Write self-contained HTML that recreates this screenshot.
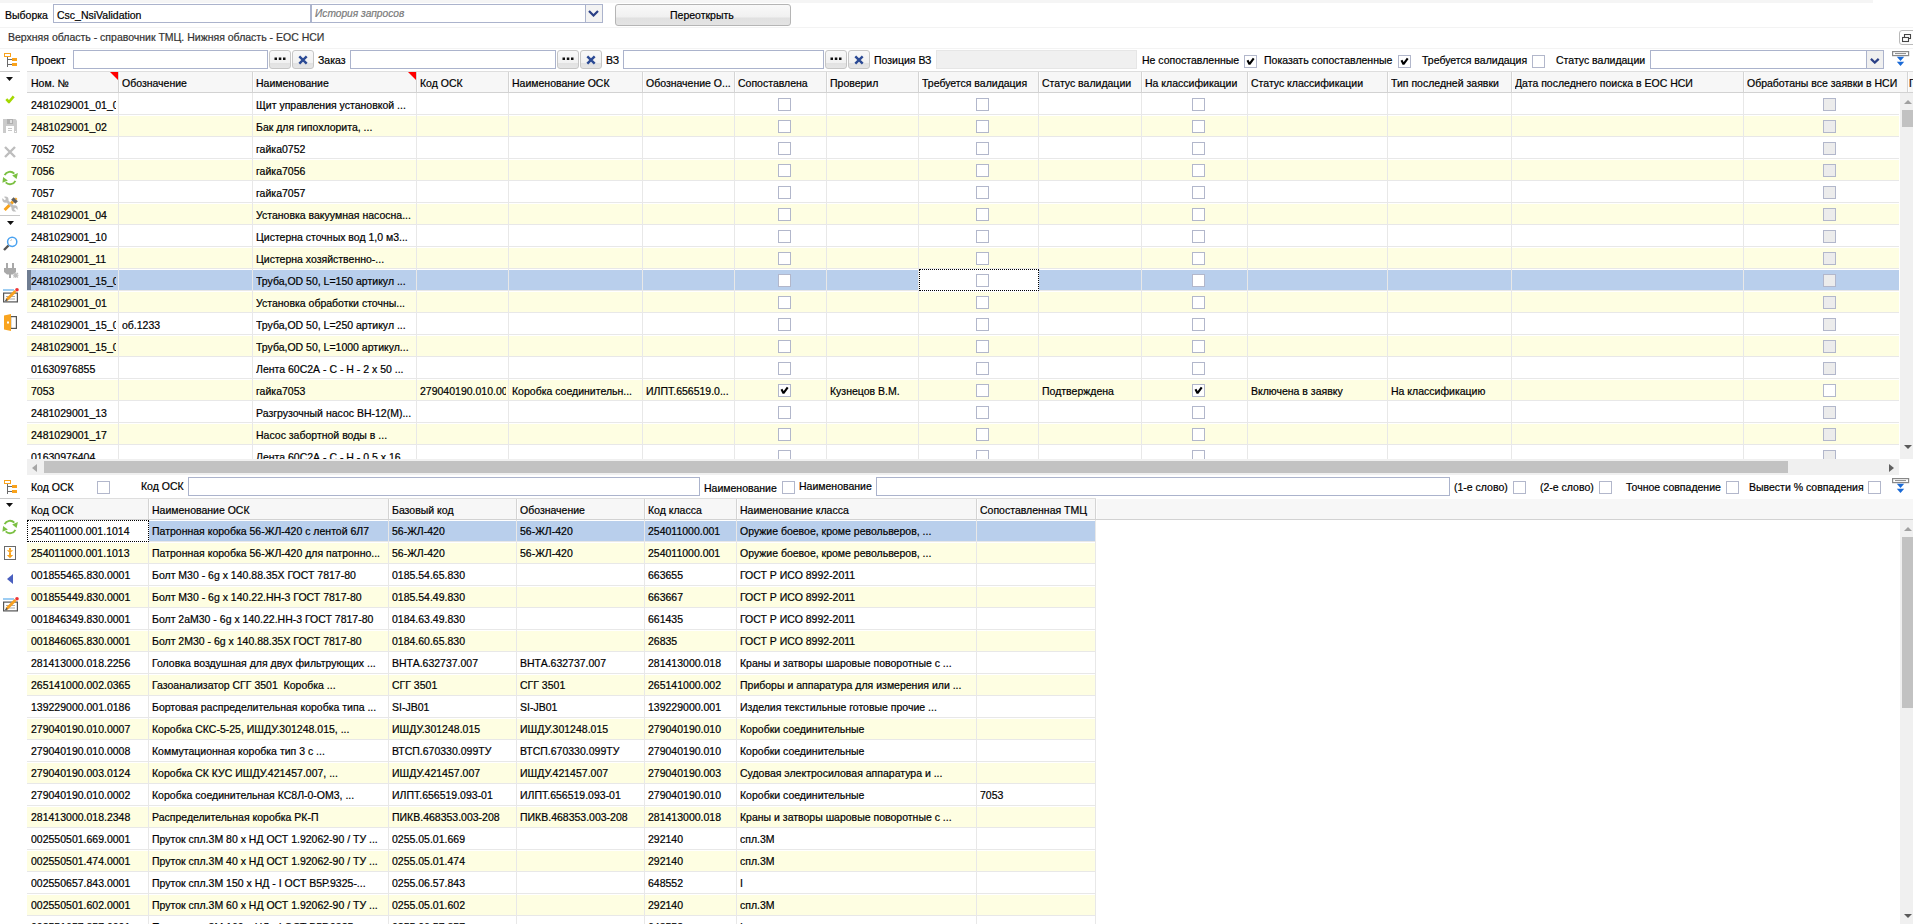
<!DOCTYPE html><html><head><meta charset="utf-8"><style>
html,body{margin:0;padding:0}
body{-webkit-text-stroke-width:0.2px;width:1913px;height:924px;overflow:hidden;position:relative;background:#fff;font-family:"Liberation Sans",sans-serif;font-size:10.5px;color:#000}
.t,.r,.cb,.btn,.hd,.ic{position:absolute}
.t{white-space:nowrap;line-height:12px;height:12px}
.cb{width:11px;height:11px;border:1px solid #b2b7cb}
.btn{border:1px solid #c6c6c6;border-radius:3px;background:linear-gradient(#f8f8f8 0,#f1f1f1 72%,#e2e2e2 73%,#e6e6e6 100%)}
.clip{position:absolute;overflow:hidden;white-space:pre;line-height:12px;height:12px}
</style></head><body>
<div class="r" style="left:0px;top:0px;width:1873px;height:3px;background:#f5f5f5"></div>
<div class="t" style="left:5px;top:9px;">Выборка</div>
<div class="r" style="left:53px;top:4px;width:256px;height:17px;border:1px solid #abb3cc;background:#fff"></div>
<div class="t" style="left:57px;top:9px;">Csc_NsiValidation</div>
<div class="r" style="left:311px;top:4px;width:290px;height:17px;border:1px solid #abb3cc;background:#fff"></div>
<div class="t" style="left:315px;top:8px;font-style:italic;color:#7a7a7a;font-size:10.2px">История запросов</div>
<div class="r" style="left:585px;top:5px;width:16px;height:17px;background:#f3f3f3;border-left:1px solid #abb3cc"></div>
<svg class="ic" style="left:588px;top:10px" width="11" height="7"><path d="M1 1 L5.5 5.5 L10 1" stroke="#2a3f86" stroke-width="2.2" fill="none"/></svg>
<div class="btn" style="left:615px;top:4px;width:174px;height:20px;border-color:#b5b5b5;background:linear-gradient(#f9f9f9 0,#f0f0f0 62%,#e0e0e0 63%,#e4e4e4 100%)"></div>
<div class="t" style="left:670px;top:9px;">Переоткрыть</div>
<div class="r" style="left:0px;top:27px;width:1913px;height:1px;background:#f3f3f3"></div>
<div class="t" style="left:8px;top:31px;color:#333">Верхняя область - справочник ТМЦ. Нижняя область - ЕОС НСИ</div>
<div class="r" style="left:1899px;top:30px;width:16px;height:13px;border:1px solid #b9b9b9;border-radius:3px;background:#fdfdfd"></div>
<svg class="ic" style="left:1902px;top:34px" width="10" height="9"><rect x="2.5" y="0.5" width="6" height="4" fill="#fdfdfd" stroke="#444" stroke-width="1.1"/><rect x="0.5" y="3.5" width="6" height="4" fill="#fdfdfd" stroke="#444" stroke-width="1.1"/></svg>
<div class="r" style="left:0px;top:48px;width:1913px;height:1px;background:#f3f3f3"></div>
<svg class="ic" style="left:4px;top:53px" width="14" height="15" viewBox="0 0 14 15"><rect x="0.5" y="0.5" width="6" height="3" fill="#fff" stroke="#f9a21b" stroke-width="1"/><path d="M3.5 4 V14 M3.5 6.5 H8 M3.5 11.5 H8" stroke="#6a6a6a" stroke-width="1" fill="none"/><rect x="8" y="5" width="5" height="3" fill="#f9a21b"/><rect x="8" y="10" width="5" height="3" fill="#f9a21b"/></svg>
<div class="t" style="left:31px;top:54px;">Проект</div>
<div class="r" style="left:73px;top:50px;width:193px;height:17px;border:1px solid #abb3cc;background:#fff"></div>
<div class="btn" style="left:269px;top:50px;width:20px;height:17px"><svg width="20" height="17" style="position:absolute;left:0;top:0"><rect x="4.5" y="6.5" width="2.5" height="2.5" fill="#111"/><rect x="8.8" y="6.5" width="2.5" height="2.5" fill="#111"/><rect x="13" y="6.5" width="2.5" height="2.5" fill="#111"/></svg></div>
<div class="btn" style="left:292px;top:50px;width:20px;height:17px"><svg width="20" height="17" style="position:absolute;left:0;top:0"><path d="M6.3 5.3 L13.7 12.7 M13.7 5.3 L6.3 12.7" stroke="#2b4a94" stroke-width="2.4"/></svg></div>
<div class="t" style="left:318px;top:54px;">Заказ</div>
<div class="r" style="left:350px;top:50px;width:204px;height:17px;border:1px solid #abb3cc;background:#fff"></div>
<div class="btn" style="left:557px;top:50px;width:20px;height:17px"><svg width="20" height="17" style="position:absolute;left:0;top:0"><rect x="4.5" y="6.5" width="2.5" height="2.5" fill="#111"/><rect x="8.8" y="6.5" width="2.5" height="2.5" fill="#111"/><rect x="13" y="6.5" width="2.5" height="2.5" fill="#111"/></svg></div>
<div class="btn" style="left:580px;top:50px;width:20px;height:17px"><svg width="20" height="17" style="position:absolute;left:0;top:0"><path d="M6.3 5.3 L13.7 12.7 M13.7 5.3 L6.3 12.7" stroke="#2b4a94" stroke-width="2.4"/></svg></div>
<div class="t" style="left:606px;top:54px;">ВЗ</div>
<div class="r" style="left:623px;top:50px;width:199px;height:17px;border:1px solid #abb3cc;background:#fff"></div>
<div class="btn" style="left:825px;top:50px;width:20px;height:17px"><svg width="20" height="17" style="position:absolute;left:0;top:0"><rect x="4.5" y="6.5" width="2.5" height="2.5" fill="#111"/><rect x="8.8" y="6.5" width="2.5" height="2.5" fill="#111"/><rect x="13" y="6.5" width="2.5" height="2.5" fill="#111"/></svg></div>
<div class="btn" style="left:848px;top:50px;width:20px;height:17px"><svg width="20" height="17" style="position:absolute;left:0;top:0"><path d="M6.3 5.3 L13.7 12.7 M13.7 5.3 L6.3 12.7" stroke="#2b4a94" stroke-width="2.4"/></svg></div>
<div class="t" style="left:874px;top:54px;">Позиция ВЗ</div>
<div class="r" style="left:936px;top:50px;width:199px;height:17px;background:#f0f0f0;border:1px solid #e6e6e6"></div>
<div class="t" style="left:1142px;top:54px;">Не сопоставленные</div>
<div class="cb" style="left:1244px;top:55px;background:#fff"><svg width="11" height="11" viewBox="0 0 11 11" style="position:absolute;left:0;top:0"><path d="M2.5 4.3 L4.5 8.2 L8.7 2.3" stroke="#000" stroke-width="2.1" fill="none" stroke-linejoin="bevel"/></svg></div>
<div class="t" style="left:1264px;top:54px;">Показать сопоставленные</div>
<div class="cb" style="left:1398px;top:55px;background:#fff"><svg width="11" height="11" viewBox="0 0 11 11" style="position:absolute;left:0;top:0"><path d="M2.5 4.3 L4.5 8.2 L8.7 2.3" stroke="#000" stroke-width="2.1" fill="none" stroke-linejoin="bevel"/></svg></div>
<div class="t" style="left:1422px;top:54px;">Требуется валидация</div>
<div class="cb" style="left:1532px;top:55px;background:#fff"></div>
<div class="t" style="left:1556px;top:54px;">Статус валидации</div>
<div class="r" style="left:1650px;top:50px;width:232px;height:17px;border:1px solid #abb3cc;background:#fff"></div>
<div class="r" style="left:1866px;top:51px;width:16px;height:17px;background:#f0f0f0;border-left:1px solid #abb3cc"></div>
<svg class="ic" style="left:1870px;top:58px" width="10" height="6"><path d="M0.9 0.9 L4.8 4.6 L8.7 0.9" stroke="#2a3f86" stroke-width="2.2" fill="none"/></svg>
<svg class="ic" style="left:1892px;top:51px" width="18" height="16" viewBox="0 0 18 16"><rect x="0.6" y="0.6" width="16" height="4" fill="#fff" stroke="#888" stroke-width="1.2"/><path d="M3 2.6 H14" stroke="#888" stroke-width="1"/><path d="M4.8 5.8 L12.2 5.8 L8.5 9.9 Z M4.8 10.7 L12.2 10.7 L8.5 15 Z" fill="#1a6ad6"/></svg>
<div class="r" style="left:0px;top:71px;width:20px;height:1px;background:#c8c8c8"></div>
<svg class="ic" style="left:6px;top:77px" width="7" height="4"><path d="M0 0 H7 L3.5 4 Z" fill="#111"/></svg>
<div class="r" style="left:27px;top:71px;width:1886px;height:22px;overflow:hidden">
<div class="r" style="left:0;top:0;width:1886px;height:20px;background:#f7f7f7;border-top:1px solid #dedede;border-bottom:1px solid #d2d2d2"></div>
<div class="r" style="left:91px;top:1px;width:1px;height:20px;background:#d4d4d4"></div><div class="r" style="left:92px;top:1px;width:1px;height:20px;background:#fdfdfd"></div>
<div class="clip" style="left:4px;top:6px;width:85px">Ном. №</div>
<svg class="ic" style="left:83px;top:1px" width="8" height="8"><path d="M0 0 H8 V8 Z" fill="#f00"/></svg>
<div class="r" style="left:225px;top:1px;width:1px;height:20px;background:#d4d4d4"></div><div class="r" style="left:226px;top:1px;width:1px;height:20px;background:#fdfdfd"></div>
<div class="clip" style="left:95px;top:6px;width:128px">Обозначение</div>
<div class="r" style="left:389px;top:1px;width:1px;height:20px;background:#d4d4d4"></div><div class="r" style="left:390px;top:1px;width:1px;height:20px;background:#fdfdfd"></div>
<div class="clip" style="left:229px;top:6px;width:158px">Наименование</div>
<svg class="ic" style="left:381px;top:1px" width="8" height="8"><path d="M0 0 H8 V8 Z" fill="#f00"/></svg>
<div class="r" style="left:481px;top:1px;width:1px;height:20px;background:#d4d4d4"></div><div class="r" style="left:482px;top:1px;width:1px;height:20px;background:#fdfdfd"></div>
<div class="clip" style="left:393px;top:6px;width:86px">Код ОСК</div>
<div class="r" style="left:615px;top:1px;width:1px;height:20px;background:#d4d4d4"></div><div class="r" style="left:616px;top:1px;width:1px;height:20px;background:#fdfdfd"></div>
<div class="clip" style="left:485px;top:6px;width:128px">Наименование ОСК</div>
<div class="r" style="left:707px;top:1px;width:1px;height:20px;background:#d4d4d4"></div><div class="r" style="left:708px;top:1px;width:1px;height:20px;background:#fdfdfd"></div>
<div class="clip" style="left:619px;top:6px;width:86px">Обозначение О...</div>
<div class="r" style="left:799px;top:1px;width:1px;height:20px;background:#d4d4d4"></div><div class="r" style="left:800px;top:1px;width:1px;height:20px;background:#fdfdfd"></div>
<div class="clip" style="left:711px;top:6px;width:86px">Сопоставлена</div>
<div class="r" style="left:891px;top:1px;width:1px;height:20px;background:#d4d4d4"></div><div class="r" style="left:892px;top:1px;width:1px;height:20px;background:#fdfdfd"></div>
<div class="clip" style="left:803px;top:6px;width:86px">Проверил</div>
<div class="r" style="left:1011px;top:1px;width:1px;height:20px;background:#d4d4d4"></div><div class="r" style="left:1012px;top:1px;width:1px;height:20px;background:#fdfdfd"></div>
<div class="clip" style="left:895px;top:6px;width:114px">Требуется валидация</div>
<div class="r" style="left:1114px;top:1px;width:1px;height:20px;background:#d4d4d4"></div><div class="r" style="left:1115px;top:1px;width:1px;height:20px;background:#fdfdfd"></div>
<div class="clip" style="left:1015px;top:6px;width:97px">Статус валидации</div>
<div class="r" style="left:1220px;top:1px;width:1px;height:20px;background:#d4d4d4"></div><div class="r" style="left:1221px;top:1px;width:1px;height:20px;background:#fdfdfd"></div>
<div class="clip" style="left:1118px;top:6px;width:100px">На классификации</div>
<div class="r" style="left:1360px;top:1px;width:1px;height:20px;background:#d4d4d4"></div><div class="r" style="left:1361px;top:1px;width:1px;height:20px;background:#fdfdfd"></div>
<div class="clip" style="left:1224px;top:6px;width:134px">Статус классификации</div>
<div class="r" style="left:1484px;top:1px;width:1px;height:20px;background:#d4d4d4"></div><div class="r" style="left:1485px;top:1px;width:1px;height:20px;background:#fdfdfd"></div>
<div class="clip" style="left:1364px;top:6px;width:118px">Тип последней заявки</div>
<div class="r" style="left:1716px;top:1px;width:1px;height:20px;background:#d4d4d4"></div><div class="r" style="left:1717px;top:1px;width:1px;height:20px;background:#fdfdfd"></div>
<div class="clip" style="left:1488px;top:6px;width:226px">Дата последнего поиска в ЕОС НСИ</div>
<div class="r" style="left:1880px;top:1px;width:1px;height:20px;background:#d4d4d4"></div><div class="r" style="left:1881px;top:1px;width:1px;height:20px;background:#fdfdfd"></div>
<div class="clip" style="left:1720px;top:6px;width:158px">Обработаны все заявки в НСИ</div>
<div class="r" style="left:1963px;top:1px;width:1px;height:20px;background:#d4d4d4"></div><div class="r" style="left:1964px;top:1px;width:1px;height:20px;background:#fdfdfd"></div>
<div class="clip" style="left:1882px;top:6px;width:77px">Г</div>
</div>
<div class="r" style="left:27px;top:93px;width:1872px;height:366px;overflow:hidden">
<div class="r" style="left:0;top:0px;width:1872px;height:20px;background:#fff;border-top:1px solid #fff;border-bottom:1px solid #e8e8e8"></div>
<div class="r" style="left:91px;top:0px;width:1px;height:22px;background:#e8e8e8"></div>
<div class="r" style="left:225px;top:0px;width:1px;height:22px;background:#e8e8e8"></div>
<div class="r" style="left:389px;top:0px;width:1px;height:22px;background:#e8e8e8"></div>
<div class="r" style="left:481px;top:0px;width:1px;height:22px;background:#e8e8e8"></div>
<div class="r" style="left:615px;top:0px;width:1px;height:22px;background:#e8e8e8"></div>
<div class="r" style="left:707px;top:0px;width:1px;height:22px;background:#e8e8e8"></div>
<div class="r" style="left:799px;top:0px;width:1px;height:22px;background:#e8e8e8"></div>
<div class="r" style="left:891px;top:0px;width:1px;height:22px;background:#e8e8e8"></div>
<div class="r" style="left:1011px;top:0px;width:1px;height:22px;background:#e8e8e8"></div>
<div class="r" style="left:1114px;top:0px;width:1px;height:22px;background:#e8e8e8"></div>
<div class="r" style="left:1220px;top:0px;width:1px;height:22px;background:#e8e8e8"></div>
<div class="r" style="left:1360px;top:0px;width:1px;height:22px;background:#e8e8e8"></div>
<div class="r" style="left:1484px;top:0px;width:1px;height:22px;background:#e8e8e8"></div>
<div class="r" style="left:1716px;top:0px;width:1px;height:22px;background:#e8e8e8"></div>
<div class="r" style="left:1880px;top:0px;width:1px;height:22px;background:#e8e8e8"></div>
<div class="clip" style="left:4px;top:6px;width:85px">2481029001_01_0</div>
<div class="clip" style="left:229px;top:6px;width:158px">Щит управления установкой ...</div>
<div class="cb" style="left:751px;top:5px;background:#fff"></div>
<div class="cb" style="left:949px;top:5px;background:#fff"></div>
<div class="cb" style="left:1165px;top:5px;background:#fff"></div>
<div class="cb" style="left:1796px;top:5px;background:#ececec"></div>
<div class="r" style="left:0;top:22px;width:1872px;height:20px;background:#fefee2;border-top:1px solid #fff;border-bottom:1px solid #e8e8e8"></div>
<div class="r" style="left:91px;top:22px;width:1px;height:22px;background:#e8e8e8"></div>
<div class="r" style="left:225px;top:22px;width:1px;height:22px;background:#e8e8e8"></div>
<div class="r" style="left:389px;top:22px;width:1px;height:22px;background:#e8e8e8"></div>
<div class="r" style="left:481px;top:22px;width:1px;height:22px;background:#e8e8e8"></div>
<div class="r" style="left:615px;top:22px;width:1px;height:22px;background:#e8e8e8"></div>
<div class="r" style="left:707px;top:22px;width:1px;height:22px;background:#e8e8e8"></div>
<div class="r" style="left:799px;top:22px;width:1px;height:22px;background:#e8e8e8"></div>
<div class="r" style="left:891px;top:22px;width:1px;height:22px;background:#e8e8e8"></div>
<div class="r" style="left:1011px;top:22px;width:1px;height:22px;background:#e8e8e8"></div>
<div class="r" style="left:1114px;top:22px;width:1px;height:22px;background:#e8e8e8"></div>
<div class="r" style="left:1220px;top:22px;width:1px;height:22px;background:#e8e8e8"></div>
<div class="r" style="left:1360px;top:22px;width:1px;height:22px;background:#e8e8e8"></div>
<div class="r" style="left:1484px;top:22px;width:1px;height:22px;background:#e8e8e8"></div>
<div class="r" style="left:1716px;top:22px;width:1px;height:22px;background:#e8e8e8"></div>
<div class="r" style="left:1880px;top:22px;width:1px;height:22px;background:#e8e8e8"></div>
<div class="clip" style="left:4px;top:28px;width:85px">2481029001_02</div>
<div class="clip" style="left:229px;top:28px;width:158px">Бак для гипохлорита, ...</div>
<div class="cb" style="left:751px;top:27px;background:#fff"></div>
<div class="cb" style="left:949px;top:27px;background:#fff"></div>
<div class="cb" style="left:1165px;top:27px;background:#fff"></div>
<div class="cb" style="left:1796px;top:27px;background:#ececec"></div>
<div class="r" style="left:0;top:44px;width:1872px;height:20px;background:#fff;border-top:1px solid #fff;border-bottom:1px solid #e8e8e8"></div>
<div class="r" style="left:91px;top:44px;width:1px;height:22px;background:#e8e8e8"></div>
<div class="r" style="left:225px;top:44px;width:1px;height:22px;background:#e8e8e8"></div>
<div class="r" style="left:389px;top:44px;width:1px;height:22px;background:#e8e8e8"></div>
<div class="r" style="left:481px;top:44px;width:1px;height:22px;background:#e8e8e8"></div>
<div class="r" style="left:615px;top:44px;width:1px;height:22px;background:#e8e8e8"></div>
<div class="r" style="left:707px;top:44px;width:1px;height:22px;background:#e8e8e8"></div>
<div class="r" style="left:799px;top:44px;width:1px;height:22px;background:#e8e8e8"></div>
<div class="r" style="left:891px;top:44px;width:1px;height:22px;background:#e8e8e8"></div>
<div class="r" style="left:1011px;top:44px;width:1px;height:22px;background:#e8e8e8"></div>
<div class="r" style="left:1114px;top:44px;width:1px;height:22px;background:#e8e8e8"></div>
<div class="r" style="left:1220px;top:44px;width:1px;height:22px;background:#e8e8e8"></div>
<div class="r" style="left:1360px;top:44px;width:1px;height:22px;background:#e8e8e8"></div>
<div class="r" style="left:1484px;top:44px;width:1px;height:22px;background:#e8e8e8"></div>
<div class="r" style="left:1716px;top:44px;width:1px;height:22px;background:#e8e8e8"></div>
<div class="r" style="left:1880px;top:44px;width:1px;height:22px;background:#e8e8e8"></div>
<div class="clip" style="left:4px;top:50px;width:85px">7052</div>
<div class="clip" style="left:229px;top:50px;width:158px">гайка0752</div>
<div class="cb" style="left:751px;top:49px;background:#fff"></div>
<div class="cb" style="left:949px;top:49px;background:#fff"></div>
<div class="cb" style="left:1165px;top:49px;background:#fff"></div>
<div class="cb" style="left:1796px;top:49px;background:#ececec"></div>
<div class="r" style="left:0;top:66px;width:1872px;height:20px;background:#fefee2;border-top:1px solid #fff;border-bottom:1px solid #e8e8e8"></div>
<div class="r" style="left:91px;top:66px;width:1px;height:22px;background:#e8e8e8"></div>
<div class="r" style="left:225px;top:66px;width:1px;height:22px;background:#e8e8e8"></div>
<div class="r" style="left:389px;top:66px;width:1px;height:22px;background:#e8e8e8"></div>
<div class="r" style="left:481px;top:66px;width:1px;height:22px;background:#e8e8e8"></div>
<div class="r" style="left:615px;top:66px;width:1px;height:22px;background:#e8e8e8"></div>
<div class="r" style="left:707px;top:66px;width:1px;height:22px;background:#e8e8e8"></div>
<div class="r" style="left:799px;top:66px;width:1px;height:22px;background:#e8e8e8"></div>
<div class="r" style="left:891px;top:66px;width:1px;height:22px;background:#e8e8e8"></div>
<div class="r" style="left:1011px;top:66px;width:1px;height:22px;background:#e8e8e8"></div>
<div class="r" style="left:1114px;top:66px;width:1px;height:22px;background:#e8e8e8"></div>
<div class="r" style="left:1220px;top:66px;width:1px;height:22px;background:#e8e8e8"></div>
<div class="r" style="left:1360px;top:66px;width:1px;height:22px;background:#e8e8e8"></div>
<div class="r" style="left:1484px;top:66px;width:1px;height:22px;background:#e8e8e8"></div>
<div class="r" style="left:1716px;top:66px;width:1px;height:22px;background:#e8e8e8"></div>
<div class="r" style="left:1880px;top:66px;width:1px;height:22px;background:#e8e8e8"></div>
<div class="clip" style="left:4px;top:72px;width:85px">7056</div>
<div class="clip" style="left:229px;top:72px;width:158px">гайка7056</div>
<div class="cb" style="left:751px;top:71px;background:#fff"></div>
<div class="cb" style="left:949px;top:71px;background:#fff"></div>
<div class="cb" style="left:1165px;top:71px;background:#fff"></div>
<div class="cb" style="left:1796px;top:71px;background:#ececec"></div>
<div class="r" style="left:0;top:88px;width:1872px;height:20px;background:#fff;border-top:1px solid #fff;border-bottom:1px solid #e8e8e8"></div>
<div class="r" style="left:91px;top:88px;width:1px;height:22px;background:#e8e8e8"></div>
<div class="r" style="left:225px;top:88px;width:1px;height:22px;background:#e8e8e8"></div>
<div class="r" style="left:389px;top:88px;width:1px;height:22px;background:#e8e8e8"></div>
<div class="r" style="left:481px;top:88px;width:1px;height:22px;background:#e8e8e8"></div>
<div class="r" style="left:615px;top:88px;width:1px;height:22px;background:#e8e8e8"></div>
<div class="r" style="left:707px;top:88px;width:1px;height:22px;background:#e8e8e8"></div>
<div class="r" style="left:799px;top:88px;width:1px;height:22px;background:#e8e8e8"></div>
<div class="r" style="left:891px;top:88px;width:1px;height:22px;background:#e8e8e8"></div>
<div class="r" style="left:1011px;top:88px;width:1px;height:22px;background:#e8e8e8"></div>
<div class="r" style="left:1114px;top:88px;width:1px;height:22px;background:#e8e8e8"></div>
<div class="r" style="left:1220px;top:88px;width:1px;height:22px;background:#e8e8e8"></div>
<div class="r" style="left:1360px;top:88px;width:1px;height:22px;background:#e8e8e8"></div>
<div class="r" style="left:1484px;top:88px;width:1px;height:22px;background:#e8e8e8"></div>
<div class="r" style="left:1716px;top:88px;width:1px;height:22px;background:#e8e8e8"></div>
<div class="r" style="left:1880px;top:88px;width:1px;height:22px;background:#e8e8e8"></div>
<div class="clip" style="left:4px;top:94px;width:85px">7057</div>
<div class="clip" style="left:229px;top:94px;width:158px">гайка7057</div>
<div class="cb" style="left:751px;top:93px;background:#fff"></div>
<div class="cb" style="left:949px;top:93px;background:#fff"></div>
<div class="cb" style="left:1165px;top:93px;background:#fff"></div>
<div class="cb" style="left:1796px;top:93px;background:#ececec"></div>
<div class="r" style="left:0;top:110px;width:1872px;height:20px;background:#fefee2;border-top:1px solid #fff;border-bottom:1px solid #e8e8e8"></div>
<div class="r" style="left:91px;top:110px;width:1px;height:22px;background:#e8e8e8"></div>
<div class="r" style="left:225px;top:110px;width:1px;height:22px;background:#e8e8e8"></div>
<div class="r" style="left:389px;top:110px;width:1px;height:22px;background:#e8e8e8"></div>
<div class="r" style="left:481px;top:110px;width:1px;height:22px;background:#e8e8e8"></div>
<div class="r" style="left:615px;top:110px;width:1px;height:22px;background:#e8e8e8"></div>
<div class="r" style="left:707px;top:110px;width:1px;height:22px;background:#e8e8e8"></div>
<div class="r" style="left:799px;top:110px;width:1px;height:22px;background:#e8e8e8"></div>
<div class="r" style="left:891px;top:110px;width:1px;height:22px;background:#e8e8e8"></div>
<div class="r" style="left:1011px;top:110px;width:1px;height:22px;background:#e8e8e8"></div>
<div class="r" style="left:1114px;top:110px;width:1px;height:22px;background:#e8e8e8"></div>
<div class="r" style="left:1220px;top:110px;width:1px;height:22px;background:#e8e8e8"></div>
<div class="r" style="left:1360px;top:110px;width:1px;height:22px;background:#e8e8e8"></div>
<div class="r" style="left:1484px;top:110px;width:1px;height:22px;background:#e8e8e8"></div>
<div class="r" style="left:1716px;top:110px;width:1px;height:22px;background:#e8e8e8"></div>
<div class="r" style="left:1880px;top:110px;width:1px;height:22px;background:#e8e8e8"></div>
<div class="clip" style="left:4px;top:116px;width:85px">2481029001_04</div>
<div class="clip" style="left:229px;top:116px;width:158px">Установка вакуумная насосна...</div>
<div class="cb" style="left:751px;top:115px;background:#fff"></div>
<div class="cb" style="left:949px;top:115px;background:#fff"></div>
<div class="cb" style="left:1165px;top:115px;background:#fff"></div>
<div class="cb" style="left:1796px;top:115px;background:#ececec"></div>
<div class="r" style="left:0;top:132px;width:1872px;height:20px;background:#fff;border-top:1px solid #fff;border-bottom:1px solid #e8e8e8"></div>
<div class="r" style="left:91px;top:132px;width:1px;height:22px;background:#e8e8e8"></div>
<div class="r" style="left:225px;top:132px;width:1px;height:22px;background:#e8e8e8"></div>
<div class="r" style="left:389px;top:132px;width:1px;height:22px;background:#e8e8e8"></div>
<div class="r" style="left:481px;top:132px;width:1px;height:22px;background:#e8e8e8"></div>
<div class="r" style="left:615px;top:132px;width:1px;height:22px;background:#e8e8e8"></div>
<div class="r" style="left:707px;top:132px;width:1px;height:22px;background:#e8e8e8"></div>
<div class="r" style="left:799px;top:132px;width:1px;height:22px;background:#e8e8e8"></div>
<div class="r" style="left:891px;top:132px;width:1px;height:22px;background:#e8e8e8"></div>
<div class="r" style="left:1011px;top:132px;width:1px;height:22px;background:#e8e8e8"></div>
<div class="r" style="left:1114px;top:132px;width:1px;height:22px;background:#e8e8e8"></div>
<div class="r" style="left:1220px;top:132px;width:1px;height:22px;background:#e8e8e8"></div>
<div class="r" style="left:1360px;top:132px;width:1px;height:22px;background:#e8e8e8"></div>
<div class="r" style="left:1484px;top:132px;width:1px;height:22px;background:#e8e8e8"></div>
<div class="r" style="left:1716px;top:132px;width:1px;height:22px;background:#e8e8e8"></div>
<div class="r" style="left:1880px;top:132px;width:1px;height:22px;background:#e8e8e8"></div>
<div class="clip" style="left:4px;top:138px;width:85px">2481029001_10</div>
<div class="clip" style="left:229px;top:138px;width:158px">Цистерна сточных вод 1,0 м3...</div>
<div class="cb" style="left:751px;top:137px;background:#fff"></div>
<div class="cb" style="left:949px;top:137px;background:#fff"></div>
<div class="cb" style="left:1165px;top:137px;background:#fff"></div>
<div class="cb" style="left:1796px;top:137px;background:#ececec"></div>
<div class="r" style="left:0;top:154px;width:1872px;height:20px;background:#fefee2;border-top:1px solid #fff;border-bottom:1px solid #e8e8e8"></div>
<div class="r" style="left:91px;top:154px;width:1px;height:22px;background:#e8e8e8"></div>
<div class="r" style="left:225px;top:154px;width:1px;height:22px;background:#e8e8e8"></div>
<div class="r" style="left:389px;top:154px;width:1px;height:22px;background:#e8e8e8"></div>
<div class="r" style="left:481px;top:154px;width:1px;height:22px;background:#e8e8e8"></div>
<div class="r" style="left:615px;top:154px;width:1px;height:22px;background:#e8e8e8"></div>
<div class="r" style="left:707px;top:154px;width:1px;height:22px;background:#e8e8e8"></div>
<div class="r" style="left:799px;top:154px;width:1px;height:22px;background:#e8e8e8"></div>
<div class="r" style="left:891px;top:154px;width:1px;height:22px;background:#e8e8e8"></div>
<div class="r" style="left:1011px;top:154px;width:1px;height:22px;background:#e8e8e8"></div>
<div class="r" style="left:1114px;top:154px;width:1px;height:22px;background:#e8e8e8"></div>
<div class="r" style="left:1220px;top:154px;width:1px;height:22px;background:#e8e8e8"></div>
<div class="r" style="left:1360px;top:154px;width:1px;height:22px;background:#e8e8e8"></div>
<div class="r" style="left:1484px;top:154px;width:1px;height:22px;background:#e8e8e8"></div>
<div class="r" style="left:1716px;top:154px;width:1px;height:22px;background:#e8e8e8"></div>
<div class="r" style="left:1880px;top:154px;width:1px;height:22px;background:#e8e8e8"></div>
<div class="clip" style="left:4px;top:160px;width:85px">2481029001_11</div>
<div class="clip" style="left:229px;top:160px;width:158px">Цистерна хозяйственно-...</div>
<div class="cb" style="left:751px;top:159px;background:#fff"></div>
<div class="cb" style="left:949px;top:159px;background:#fff"></div>
<div class="cb" style="left:1165px;top:159px;background:#fff"></div>
<div class="cb" style="left:1796px;top:159px;background:#ececec"></div>
<div class="r" style="left:0;top:176px;width:1872px;height:20px;background:#b9cfec;border-top:1px solid #fff;border-bottom:1px solid #e8e8e8"></div>
<div class="r" style="left:91px;top:176px;width:1px;height:22px;background:#e8e8e8"></div>
<div class="r" style="left:225px;top:176px;width:1px;height:22px;background:#e8e8e8"></div>
<div class="r" style="left:389px;top:176px;width:1px;height:22px;background:#e8e8e8"></div>
<div class="r" style="left:481px;top:176px;width:1px;height:22px;background:#e8e8e8"></div>
<div class="r" style="left:615px;top:176px;width:1px;height:22px;background:#e8e8e8"></div>
<div class="r" style="left:707px;top:176px;width:1px;height:22px;background:#e8e8e8"></div>
<div class="r" style="left:799px;top:176px;width:1px;height:22px;background:#e8e8e8"></div>
<div class="r" style="left:891px;top:176px;width:1px;height:22px;background:#e8e8e8"></div>
<div class="r" style="left:1011px;top:176px;width:1px;height:22px;background:#e8e8e8"></div>
<div class="r" style="left:1114px;top:176px;width:1px;height:22px;background:#e8e8e8"></div>
<div class="r" style="left:1220px;top:176px;width:1px;height:22px;background:#e8e8e8"></div>
<div class="r" style="left:1360px;top:176px;width:1px;height:22px;background:#e8e8e8"></div>
<div class="r" style="left:1484px;top:176px;width:1px;height:22px;background:#e8e8e8"></div>
<div class="r" style="left:1716px;top:176px;width:1px;height:22px;background:#e8e8e8"></div>
<div class="r" style="left:1880px;top:176px;width:1px;height:22px;background:#e8e8e8"></div>
<div class="r" style="left:0;top:177px;width:4px;height:20px;background:#6f7d92"></div>
<div class="r" style="left:892px;top:176px;width:118px;height:20px;background:#fff;border:1px dotted #000"></div>
<div class="clip" style="left:4px;top:182px;width:85px">2481029001_15_0</div>
<div class="clip" style="left:229px;top:182px;width:158px">Труба,OD 50, L=150 артикул ...</div>
<div class="cb" style="left:751px;top:181px;background:#fff"></div>
<div class="cb" style="left:949px;top:181px;background:#fff"></div>
<div class="cb" style="left:1165px;top:181px;background:#fff"></div>
<div class="cb" style="left:1796px;top:181px;background:#ececec"></div>
<div class="r" style="left:0;top:198px;width:1872px;height:20px;background:#fefee2;border-top:1px solid #fff;border-bottom:1px solid #e8e8e8"></div>
<div class="r" style="left:91px;top:198px;width:1px;height:22px;background:#e8e8e8"></div>
<div class="r" style="left:225px;top:198px;width:1px;height:22px;background:#e8e8e8"></div>
<div class="r" style="left:389px;top:198px;width:1px;height:22px;background:#e8e8e8"></div>
<div class="r" style="left:481px;top:198px;width:1px;height:22px;background:#e8e8e8"></div>
<div class="r" style="left:615px;top:198px;width:1px;height:22px;background:#e8e8e8"></div>
<div class="r" style="left:707px;top:198px;width:1px;height:22px;background:#e8e8e8"></div>
<div class="r" style="left:799px;top:198px;width:1px;height:22px;background:#e8e8e8"></div>
<div class="r" style="left:891px;top:198px;width:1px;height:22px;background:#e8e8e8"></div>
<div class="r" style="left:1011px;top:198px;width:1px;height:22px;background:#e8e8e8"></div>
<div class="r" style="left:1114px;top:198px;width:1px;height:22px;background:#e8e8e8"></div>
<div class="r" style="left:1220px;top:198px;width:1px;height:22px;background:#e8e8e8"></div>
<div class="r" style="left:1360px;top:198px;width:1px;height:22px;background:#e8e8e8"></div>
<div class="r" style="left:1484px;top:198px;width:1px;height:22px;background:#e8e8e8"></div>
<div class="r" style="left:1716px;top:198px;width:1px;height:22px;background:#e8e8e8"></div>
<div class="r" style="left:1880px;top:198px;width:1px;height:22px;background:#e8e8e8"></div>
<div class="clip" style="left:4px;top:204px;width:85px">2481029001_01</div>
<div class="clip" style="left:229px;top:204px;width:158px">Установка обработки сточны...</div>
<div class="cb" style="left:751px;top:203px;background:#fff"></div>
<div class="cb" style="left:949px;top:203px;background:#fff"></div>
<div class="cb" style="left:1165px;top:203px;background:#fff"></div>
<div class="cb" style="left:1796px;top:203px;background:#ececec"></div>
<div class="r" style="left:0;top:220px;width:1872px;height:20px;background:#fff;border-top:1px solid #fff;border-bottom:1px solid #e8e8e8"></div>
<div class="r" style="left:91px;top:220px;width:1px;height:22px;background:#e8e8e8"></div>
<div class="r" style="left:225px;top:220px;width:1px;height:22px;background:#e8e8e8"></div>
<div class="r" style="left:389px;top:220px;width:1px;height:22px;background:#e8e8e8"></div>
<div class="r" style="left:481px;top:220px;width:1px;height:22px;background:#e8e8e8"></div>
<div class="r" style="left:615px;top:220px;width:1px;height:22px;background:#e8e8e8"></div>
<div class="r" style="left:707px;top:220px;width:1px;height:22px;background:#e8e8e8"></div>
<div class="r" style="left:799px;top:220px;width:1px;height:22px;background:#e8e8e8"></div>
<div class="r" style="left:891px;top:220px;width:1px;height:22px;background:#e8e8e8"></div>
<div class="r" style="left:1011px;top:220px;width:1px;height:22px;background:#e8e8e8"></div>
<div class="r" style="left:1114px;top:220px;width:1px;height:22px;background:#e8e8e8"></div>
<div class="r" style="left:1220px;top:220px;width:1px;height:22px;background:#e8e8e8"></div>
<div class="r" style="left:1360px;top:220px;width:1px;height:22px;background:#e8e8e8"></div>
<div class="r" style="left:1484px;top:220px;width:1px;height:22px;background:#e8e8e8"></div>
<div class="r" style="left:1716px;top:220px;width:1px;height:22px;background:#e8e8e8"></div>
<div class="r" style="left:1880px;top:220px;width:1px;height:22px;background:#e8e8e8"></div>
<div class="clip" style="left:4px;top:226px;width:85px">2481029001_15_0</div>
<div class="clip" style="left:95px;top:226px;width:128px">об.1233</div>
<div class="clip" style="left:229px;top:226px;width:158px">Труба,OD 50, L=250 артикул ...</div>
<div class="cb" style="left:751px;top:225px;background:#fff"></div>
<div class="cb" style="left:949px;top:225px;background:#fff"></div>
<div class="cb" style="left:1165px;top:225px;background:#fff"></div>
<div class="cb" style="left:1796px;top:225px;background:#ececec"></div>
<div class="r" style="left:0;top:242px;width:1872px;height:20px;background:#fefee2;border-top:1px solid #fff;border-bottom:1px solid #e8e8e8"></div>
<div class="r" style="left:91px;top:242px;width:1px;height:22px;background:#e8e8e8"></div>
<div class="r" style="left:225px;top:242px;width:1px;height:22px;background:#e8e8e8"></div>
<div class="r" style="left:389px;top:242px;width:1px;height:22px;background:#e8e8e8"></div>
<div class="r" style="left:481px;top:242px;width:1px;height:22px;background:#e8e8e8"></div>
<div class="r" style="left:615px;top:242px;width:1px;height:22px;background:#e8e8e8"></div>
<div class="r" style="left:707px;top:242px;width:1px;height:22px;background:#e8e8e8"></div>
<div class="r" style="left:799px;top:242px;width:1px;height:22px;background:#e8e8e8"></div>
<div class="r" style="left:891px;top:242px;width:1px;height:22px;background:#e8e8e8"></div>
<div class="r" style="left:1011px;top:242px;width:1px;height:22px;background:#e8e8e8"></div>
<div class="r" style="left:1114px;top:242px;width:1px;height:22px;background:#e8e8e8"></div>
<div class="r" style="left:1220px;top:242px;width:1px;height:22px;background:#e8e8e8"></div>
<div class="r" style="left:1360px;top:242px;width:1px;height:22px;background:#e8e8e8"></div>
<div class="r" style="left:1484px;top:242px;width:1px;height:22px;background:#e8e8e8"></div>
<div class="r" style="left:1716px;top:242px;width:1px;height:22px;background:#e8e8e8"></div>
<div class="r" style="left:1880px;top:242px;width:1px;height:22px;background:#e8e8e8"></div>
<div class="clip" style="left:4px;top:248px;width:85px">2481029001_15_0</div>
<div class="clip" style="left:229px;top:248px;width:158px">Труба,OD 50, L=1000 артикул...</div>
<div class="cb" style="left:751px;top:247px;background:#fff"></div>
<div class="cb" style="left:949px;top:247px;background:#fff"></div>
<div class="cb" style="left:1165px;top:247px;background:#fff"></div>
<div class="cb" style="left:1796px;top:247px;background:#ececec"></div>
<div class="r" style="left:0;top:264px;width:1872px;height:20px;background:#fff;border-top:1px solid #fff;border-bottom:1px solid #e8e8e8"></div>
<div class="r" style="left:91px;top:264px;width:1px;height:22px;background:#e8e8e8"></div>
<div class="r" style="left:225px;top:264px;width:1px;height:22px;background:#e8e8e8"></div>
<div class="r" style="left:389px;top:264px;width:1px;height:22px;background:#e8e8e8"></div>
<div class="r" style="left:481px;top:264px;width:1px;height:22px;background:#e8e8e8"></div>
<div class="r" style="left:615px;top:264px;width:1px;height:22px;background:#e8e8e8"></div>
<div class="r" style="left:707px;top:264px;width:1px;height:22px;background:#e8e8e8"></div>
<div class="r" style="left:799px;top:264px;width:1px;height:22px;background:#e8e8e8"></div>
<div class="r" style="left:891px;top:264px;width:1px;height:22px;background:#e8e8e8"></div>
<div class="r" style="left:1011px;top:264px;width:1px;height:22px;background:#e8e8e8"></div>
<div class="r" style="left:1114px;top:264px;width:1px;height:22px;background:#e8e8e8"></div>
<div class="r" style="left:1220px;top:264px;width:1px;height:22px;background:#e8e8e8"></div>
<div class="r" style="left:1360px;top:264px;width:1px;height:22px;background:#e8e8e8"></div>
<div class="r" style="left:1484px;top:264px;width:1px;height:22px;background:#e8e8e8"></div>
<div class="r" style="left:1716px;top:264px;width:1px;height:22px;background:#e8e8e8"></div>
<div class="r" style="left:1880px;top:264px;width:1px;height:22px;background:#e8e8e8"></div>
<div class="clip" style="left:4px;top:270px;width:85px">01630976855</div>
<div class="clip" style="left:229px;top:270px;width:158px">Лента 60С2А - С - Н - 2 х 50 ...</div>
<div class="cb" style="left:751px;top:269px;background:#fff"></div>
<div class="cb" style="left:949px;top:269px;background:#fff"></div>
<div class="cb" style="left:1165px;top:269px;background:#fff"></div>
<div class="cb" style="left:1796px;top:269px;background:#ececec"></div>
<div class="r" style="left:0;top:286px;width:1872px;height:20px;background:#fefee2;border-top:1px solid #fff;border-bottom:1px solid #e8e8e8"></div>
<div class="r" style="left:91px;top:286px;width:1px;height:22px;background:#e8e8e8"></div>
<div class="r" style="left:225px;top:286px;width:1px;height:22px;background:#e8e8e8"></div>
<div class="r" style="left:389px;top:286px;width:1px;height:22px;background:#e8e8e8"></div>
<div class="r" style="left:481px;top:286px;width:1px;height:22px;background:#e8e8e8"></div>
<div class="r" style="left:615px;top:286px;width:1px;height:22px;background:#e8e8e8"></div>
<div class="r" style="left:707px;top:286px;width:1px;height:22px;background:#e8e8e8"></div>
<div class="r" style="left:799px;top:286px;width:1px;height:22px;background:#e8e8e8"></div>
<div class="r" style="left:891px;top:286px;width:1px;height:22px;background:#e8e8e8"></div>
<div class="r" style="left:1011px;top:286px;width:1px;height:22px;background:#e8e8e8"></div>
<div class="r" style="left:1114px;top:286px;width:1px;height:22px;background:#e8e8e8"></div>
<div class="r" style="left:1220px;top:286px;width:1px;height:22px;background:#e8e8e8"></div>
<div class="r" style="left:1360px;top:286px;width:1px;height:22px;background:#e8e8e8"></div>
<div class="r" style="left:1484px;top:286px;width:1px;height:22px;background:#e8e8e8"></div>
<div class="r" style="left:1716px;top:286px;width:1px;height:22px;background:#e8e8e8"></div>
<div class="r" style="left:1880px;top:286px;width:1px;height:22px;background:#e8e8e8"></div>
<div class="clip" style="left:4px;top:292px;width:85px">7053</div>
<div class="clip" style="left:229px;top:292px;width:158px">гайка7053</div>
<div class="clip" style="left:393px;top:292px;width:86px">279040190.010.0001</div>
<div class="clip" style="left:485px;top:292px;width:128px">Коробка соединительн...</div>
<div class="clip" style="left:619px;top:292px;width:86px">ИЛПТ.656519.0...</div>
<div class="clip" style="left:803px;top:292px;width:86px">Кузнецов В.М.</div>
<div class="clip" style="left:1015px;top:292px;width:97px">Подтверждена</div>
<div class="clip" style="left:1224px;top:292px;width:134px">Включена в заявку</div>
<div class="clip" style="left:1364px;top:292px;width:118px">На классификацию</div>
<div class="cb" style="left:751px;top:291px;background:#fff"><svg width="11" height="11" style="position:absolute;left:0;top:0"><path d="M2.5 4.3 L4.5 8.2 L8.7 2.3" stroke="#000" stroke-width="2.1" fill="none" stroke-linejoin="bevel"/></svg></div>
<div class="cb" style="left:949px;top:291px;background:#fff"></div>
<div class="cb" style="left:1165px;top:291px;background:#fff"><svg width="11" height="11" style="position:absolute;left:0;top:0"><path d="M2.5 4.3 L4.5 8.2 L8.7 2.3" stroke="#000" stroke-width="2.1" fill="none" stroke-linejoin="bevel"/></svg></div>
<div class="cb" style="left:1796px;top:291px;background:#fff"></div>
<div class="r" style="left:0;top:308px;width:1872px;height:20px;background:#fff;border-top:1px solid #fff;border-bottom:1px solid #e8e8e8"></div>
<div class="r" style="left:91px;top:308px;width:1px;height:22px;background:#e8e8e8"></div>
<div class="r" style="left:225px;top:308px;width:1px;height:22px;background:#e8e8e8"></div>
<div class="r" style="left:389px;top:308px;width:1px;height:22px;background:#e8e8e8"></div>
<div class="r" style="left:481px;top:308px;width:1px;height:22px;background:#e8e8e8"></div>
<div class="r" style="left:615px;top:308px;width:1px;height:22px;background:#e8e8e8"></div>
<div class="r" style="left:707px;top:308px;width:1px;height:22px;background:#e8e8e8"></div>
<div class="r" style="left:799px;top:308px;width:1px;height:22px;background:#e8e8e8"></div>
<div class="r" style="left:891px;top:308px;width:1px;height:22px;background:#e8e8e8"></div>
<div class="r" style="left:1011px;top:308px;width:1px;height:22px;background:#e8e8e8"></div>
<div class="r" style="left:1114px;top:308px;width:1px;height:22px;background:#e8e8e8"></div>
<div class="r" style="left:1220px;top:308px;width:1px;height:22px;background:#e8e8e8"></div>
<div class="r" style="left:1360px;top:308px;width:1px;height:22px;background:#e8e8e8"></div>
<div class="r" style="left:1484px;top:308px;width:1px;height:22px;background:#e8e8e8"></div>
<div class="r" style="left:1716px;top:308px;width:1px;height:22px;background:#e8e8e8"></div>
<div class="r" style="left:1880px;top:308px;width:1px;height:22px;background:#e8e8e8"></div>
<div class="clip" style="left:4px;top:314px;width:85px">2481029001_13</div>
<div class="clip" style="left:229px;top:314px;width:158px">Разгрузочный насос ВН-12(М)...</div>
<div class="cb" style="left:751px;top:313px;background:#fff"></div>
<div class="cb" style="left:949px;top:313px;background:#fff"></div>
<div class="cb" style="left:1165px;top:313px;background:#fff"></div>
<div class="cb" style="left:1796px;top:313px;background:#ececec"></div>
<div class="r" style="left:0;top:330px;width:1872px;height:20px;background:#fefee2;border-top:1px solid #fff;border-bottom:1px solid #e8e8e8"></div>
<div class="r" style="left:91px;top:330px;width:1px;height:22px;background:#e8e8e8"></div>
<div class="r" style="left:225px;top:330px;width:1px;height:22px;background:#e8e8e8"></div>
<div class="r" style="left:389px;top:330px;width:1px;height:22px;background:#e8e8e8"></div>
<div class="r" style="left:481px;top:330px;width:1px;height:22px;background:#e8e8e8"></div>
<div class="r" style="left:615px;top:330px;width:1px;height:22px;background:#e8e8e8"></div>
<div class="r" style="left:707px;top:330px;width:1px;height:22px;background:#e8e8e8"></div>
<div class="r" style="left:799px;top:330px;width:1px;height:22px;background:#e8e8e8"></div>
<div class="r" style="left:891px;top:330px;width:1px;height:22px;background:#e8e8e8"></div>
<div class="r" style="left:1011px;top:330px;width:1px;height:22px;background:#e8e8e8"></div>
<div class="r" style="left:1114px;top:330px;width:1px;height:22px;background:#e8e8e8"></div>
<div class="r" style="left:1220px;top:330px;width:1px;height:22px;background:#e8e8e8"></div>
<div class="r" style="left:1360px;top:330px;width:1px;height:22px;background:#e8e8e8"></div>
<div class="r" style="left:1484px;top:330px;width:1px;height:22px;background:#e8e8e8"></div>
<div class="r" style="left:1716px;top:330px;width:1px;height:22px;background:#e8e8e8"></div>
<div class="r" style="left:1880px;top:330px;width:1px;height:22px;background:#e8e8e8"></div>
<div class="clip" style="left:4px;top:336px;width:85px">2481029001_17</div>
<div class="clip" style="left:229px;top:336px;width:158px">Насос забортной воды в ...</div>
<div class="cb" style="left:751px;top:335px;background:#fff"></div>
<div class="cb" style="left:949px;top:335px;background:#fff"></div>
<div class="cb" style="left:1165px;top:335px;background:#fff"></div>
<div class="cb" style="left:1796px;top:335px;background:#ececec"></div>
<div class="r" style="left:0;top:352px;width:1872px;height:20px;background:#fff;border-top:1px solid #fff;border-bottom:1px solid #e8e8e8"></div>
<div class="r" style="left:91px;top:352px;width:1px;height:22px;background:#e8e8e8"></div>
<div class="r" style="left:225px;top:352px;width:1px;height:22px;background:#e8e8e8"></div>
<div class="r" style="left:389px;top:352px;width:1px;height:22px;background:#e8e8e8"></div>
<div class="r" style="left:481px;top:352px;width:1px;height:22px;background:#e8e8e8"></div>
<div class="r" style="left:615px;top:352px;width:1px;height:22px;background:#e8e8e8"></div>
<div class="r" style="left:707px;top:352px;width:1px;height:22px;background:#e8e8e8"></div>
<div class="r" style="left:799px;top:352px;width:1px;height:22px;background:#e8e8e8"></div>
<div class="r" style="left:891px;top:352px;width:1px;height:22px;background:#e8e8e8"></div>
<div class="r" style="left:1011px;top:352px;width:1px;height:22px;background:#e8e8e8"></div>
<div class="r" style="left:1114px;top:352px;width:1px;height:22px;background:#e8e8e8"></div>
<div class="r" style="left:1220px;top:352px;width:1px;height:22px;background:#e8e8e8"></div>
<div class="r" style="left:1360px;top:352px;width:1px;height:22px;background:#e8e8e8"></div>
<div class="r" style="left:1484px;top:352px;width:1px;height:22px;background:#e8e8e8"></div>
<div class="r" style="left:1716px;top:352px;width:1px;height:22px;background:#e8e8e8"></div>
<div class="r" style="left:1880px;top:352px;width:1px;height:22px;background:#e8e8e8"></div>
<div class="clip" style="left:4px;top:358px;width:85px">01630976404</div>
<div class="clip" style="left:229px;top:358px;width:158px">Лента 60С2А - С - Н - 0,5 х 16 ...</div>
<div class="cb" style="left:751px;top:357px;background:#fff"></div>
<div class="cb" style="left:949px;top:357px;background:#fff"></div>
<div class="cb" style="left:1165px;top:357px;background:#fff"></div>
<div class="cb" style="left:1796px;top:357px;background:#ececec"></div>
</div>
<div class="r" style="left:1900px;top:93px;width:13px;height:366px;background:#f0f0f0"></div>
<svg class="ic" style="left:1904px;top:100px" width="8" height="4"><path d="M0 4 L4 0 L8 4 Z" fill="#a0a0a0"/></svg>
<div class="r" style="left:1902px;top:110px;width:11px;height:17px;background:#c2c2c2"></div>
<svg class="ic" style="left:1904px;top:445px" width="8" height="4"><path d="M0 0 L4 4 L8 0 Z" fill="#5a5a5a"/></svg>
<div class="r" style="left:27px;top:459px;width:1872px;height:16px;background:#f0f0f0"></div>
<svg class="ic" style="left:32px;top:464px" width="5" height="8"><path d="M5 0 L0 4 L5 8 Z" fill="#a6a6a6"/></svg>
<div class="r" style="left:44px;top:461px;width:1744px;height:12px;background:#c2c2c2"></div>
<svg class="ic" style="left:1889px;top:464px" width="5" height="8"><path d="M0 0 L5 4 L0 8 Z" fill="#606060"/></svg>
<svg class="ic" style="left:4px;top:480px" width="14" height="15" viewBox="0 0 14 15"><rect x="0.5" y="0.5" width="6" height="3" fill="#fff" stroke="#f9a21b" stroke-width="1"/><path d="M3.5 4 V14 M3.5 6.5 H8 M3.5 11.5 H8" stroke="#6a6a6a" stroke-width="1" fill="none"/><rect x="8" y="5" width="5" height="3" fill="#f9a21b"/><rect x="8" y="10" width="5" height="3" fill="#f9a21b"/></svg>
<div class="t" style="left:31px;top:481px;">Код ОСК</div>
<div class="cb" style="left:97px;top:481px;background:#fff"></div>
<div class="t" style="left:141px;top:480px;">Код ОСК</div>
<div class="r" style="left:188px;top:477px;width:510px;height:17px;border:1px solid #abb3cc;background:#fff"></div>
<div class="t" style="left:704px;top:482px;">Наименование</div>
<div class="cb" style="left:782px;top:481px;background:#fff"></div>
<div class="t" style="left:799px;top:480px;">Наименование</div>
<div class="r" style="left:876px;top:477px;width:572px;height:17px;border:1px solid #abb3cc;background:#fff"></div>
<div class="t" style="left:1454px;top:481px;">(1-е слово)</div>
<div class="cb" style="left:1513px;top:481px;background:#fff"></div>
<div class="t" style="left:1540px;top:481px;">(2-е слово)</div>
<div class="cb" style="left:1599px;top:481px;background:#fff"></div>
<div class="t" style="left:1626px;top:481px;">Точное совпадение</div>
<div class="cb" style="left:1726px;top:481px;background:#fff"></div>
<div class="t" style="left:1749px;top:481px;">Вывести % совпадения</div>
<div class="cb" style="left:1868px;top:481px;background:#fff"></div>
<svg class="ic" style="left:1892px;top:478px" width="18" height="16" viewBox="0 0 18 16"><rect x="0.6" y="0.6" width="16" height="4" fill="#fff" stroke="#888" stroke-width="1.2"/><path d="M3 2.6 H14" stroke="#888" stroke-width="1"/><path d="M4.8 5.8 L12.2 5.8 L8.5 9.9 Z M4.8 10.7 L12.2 10.7 L8.5 15 Z" fill="#1a6ad6"/></svg>
<div class="r" style="left:0px;top:498px;width:20px;height:1px;background:#c8c8c8"></div>
<svg class="ic" style="left:6px;top:503px" width="7" height="4"><path d="M0 0 H7 L3.5 4 Z" fill="#111"/></svg>
<div class="r" style="left:27px;top:498px;width:1886px;height:22px;overflow:hidden">
<div class="r" style="left:0;top:1px;width:1886px;height:20px;background:#f7f7f7;border-bottom:1px solid #d2d2d2"></div>
<div class="r" style="left:0;top:0;width:1069px;height:1px;background:#dedede"></div>
<div class="r" style="left:121px;top:1px;width:1px;height:20px;background:#d4d4d4"></div><div class="r" style="left:122px;top:1px;width:1px;height:20px;background:#fdfdfd"></div>
<div class="clip" style="left:4px;top:6px;width:116px">Код ОСК</div>
<div class="r" style="left:361px;top:1px;width:1px;height:20px;background:#d4d4d4"></div><div class="r" style="left:362px;top:1px;width:1px;height:20px;background:#fdfdfd"></div>
<div class="clip" style="left:125px;top:6px;width:235px">Наименование ОСК</div>
<div class="r" style="left:489px;top:1px;width:1px;height:20px;background:#d4d4d4"></div><div class="r" style="left:490px;top:1px;width:1px;height:20px;background:#fdfdfd"></div>
<div class="clip" style="left:365px;top:6px;width:123px">Базовый код</div>
<div class="r" style="left:617px;top:1px;width:1px;height:20px;background:#d4d4d4"></div><div class="r" style="left:618px;top:1px;width:1px;height:20px;background:#fdfdfd"></div>
<div class="clip" style="left:493px;top:6px;width:123px">Обозначение</div>
<div class="r" style="left:709px;top:1px;width:1px;height:20px;background:#d4d4d4"></div><div class="r" style="left:710px;top:1px;width:1px;height:20px;background:#fdfdfd"></div>
<div class="clip" style="left:621px;top:6px;width:87px">Код класса</div>
<div class="r" style="left:949px;top:1px;width:1px;height:20px;background:#d4d4d4"></div><div class="r" style="left:950px;top:1px;width:1px;height:20px;background:#fdfdfd"></div>
<div class="clip" style="left:713px;top:6px;width:235px">Наименование класса</div>
<div class="r" style="left:1068px;top:1px;width:1px;height:20px;background:#d4d4d4"></div><div class="r" style="left:1069px;top:1px;width:1px;height:20px;background:#fdfdfd"></div>
<div class="clip" style="left:953px;top:6px;width:114px">Сопоставленная ТМЦ</div>
</div>
<div class="r" style="left:27px;top:520px;width:1872px;height:404px;overflow:hidden">
<div class="r" style="left:0;top:0px;width:1069px;height:20px;background:#b9cfec;border-top:1px solid #fff;border-bottom:1px solid #e8e8e8"></div>
<div class="r" style="left:121px;top:0px;width:1px;height:22px;background:#e8e8e8"></div>
<div class="r" style="left:361px;top:0px;width:1px;height:22px;background:#e8e8e8"></div>
<div class="r" style="left:489px;top:0px;width:1px;height:22px;background:#e8e8e8"></div>
<div class="r" style="left:617px;top:0px;width:1px;height:22px;background:#e8e8e8"></div>
<div class="r" style="left:709px;top:0px;width:1px;height:22px;background:#e8e8e8"></div>
<div class="r" style="left:949px;top:0px;width:1px;height:22px;background:#e8e8e8"></div>
<div class="r" style="left:1068px;top:0px;width:1px;height:22px;background:#e8e8e8"></div>
<div class="r" style="left:0;top:0px;width:120px;height:20px;background:#fff;border:1px dotted #000"></div>
<div class="clip" style="left:4px;top:5px;width:115px">254011000.001.1014</div>
<div class="clip" style="left:125px;top:5px;width:234px">Патронная коробка 56-ЖЛ-420 с лентой 6Л7</div>
<div class="clip" style="left:365px;top:5px;width:122px">56-ЖЛ-420</div>
<div class="clip" style="left:493px;top:5px;width:122px">56-ЖЛ-420</div>
<div class="clip" style="left:621px;top:5px;width:86px">254011000.001</div>
<div class="clip" style="left:713px;top:5px;width:234px">Оружие боевое, кроме револьверов, ...</div>
<div class="r" style="left:0;top:22px;width:1069px;height:20px;background:#fefee2;border-top:1px solid #fff;border-bottom:1px solid #e8e8e8"></div>
<div class="r" style="left:121px;top:22px;width:1px;height:22px;background:#e8e8e8"></div>
<div class="r" style="left:361px;top:22px;width:1px;height:22px;background:#e8e8e8"></div>
<div class="r" style="left:489px;top:22px;width:1px;height:22px;background:#e8e8e8"></div>
<div class="r" style="left:617px;top:22px;width:1px;height:22px;background:#e8e8e8"></div>
<div class="r" style="left:709px;top:22px;width:1px;height:22px;background:#e8e8e8"></div>
<div class="r" style="left:949px;top:22px;width:1px;height:22px;background:#e8e8e8"></div>
<div class="r" style="left:1068px;top:22px;width:1px;height:22px;background:#e8e8e8"></div>
<div class="clip" style="left:4px;top:27px;width:115px">254011000.001.1013</div>
<div class="clip" style="left:125px;top:27px;width:234px">Патронная коробка 56-ЖЛ-420 для патронно...</div>
<div class="clip" style="left:365px;top:27px;width:122px">56-ЖЛ-420</div>
<div class="clip" style="left:493px;top:27px;width:122px">56-ЖЛ-420</div>
<div class="clip" style="left:621px;top:27px;width:86px">254011000.001</div>
<div class="clip" style="left:713px;top:27px;width:234px">Оружие боевое, кроме револьверов, ...</div>
<div class="r" style="left:0;top:44px;width:1069px;height:20px;background:#fff;border-top:1px solid #fff;border-bottom:1px solid #e8e8e8"></div>
<div class="r" style="left:121px;top:44px;width:1px;height:22px;background:#e8e8e8"></div>
<div class="r" style="left:361px;top:44px;width:1px;height:22px;background:#e8e8e8"></div>
<div class="r" style="left:489px;top:44px;width:1px;height:22px;background:#e8e8e8"></div>
<div class="r" style="left:617px;top:44px;width:1px;height:22px;background:#e8e8e8"></div>
<div class="r" style="left:709px;top:44px;width:1px;height:22px;background:#e8e8e8"></div>
<div class="r" style="left:949px;top:44px;width:1px;height:22px;background:#e8e8e8"></div>
<div class="r" style="left:1068px;top:44px;width:1px;height:22px;background:#e8e8e8"></div>
<div class="clip" style="left:4px;top:49px;width:115px">001855465.830.0001</div>
<div class="clip" style="left:125px;top:49px;width:234px">Болт М30 - 6g x 140.88.35Х ГОСТ 7817-80</div>
<div class="clip" style="left:365px;top:49px;width:122px">0185.54.65.830</div>
<div class="clip" style="left:621px;top:49px;width:86px">663655</div>
<div class="clip" style="left:713px;top:49px;width:234px">ГОСТ Р ИСО 8992-2011</div>
<div class="r" style="left:0;top:66px;width:1069px;height:20px;background:#fefee2;border-top:1px solid #fff;border-bottom:1px solid #e8e8e8"></div>
<div class="r" style="left:121px;top:66px;width:1px;height:22px;background:#e8e8e8"></div>
<div class="r" style="left:361px;top:66px;width:1px;height:22px;background:#e8e8e8"></div>
<div class="r" style="left:489px;top:66px;width:1px;height:22px;background:#e8e8e8"></div>
<div class="r" style="left:617px;top:66px;width:1px;height:22px;background:#e8e8e8"></div>
<div class="r" style="left:709px;top:66px;width:1px;height:22px;background:#e8e8e8"></div>
<div class="r" style="left:949px;top:66px;width:1px;height:22px;background:#e8e8e8"></div>
<div class="r" style="left:1068px;top:66px;width:1px;height:22px;background:#e8e8e8"></div>
<div class="clip" style="left:4px;top:71px;width:115px">001855449.830.0001</div>
<div class="clip" style="left:125px;top:71px;width:234px">Болт М30 - 6g x 140.22.НН-3 ГОСТ 7817-80</div>
<div class="clip" style="left:365px;top:71px;width:122px">0185.54.49.830</div>
<div class="clip" style="left:621px;top:71px;width:86px">663667</div>
<div class="clip" style="left:713px;top:71px;width:234px">ГОСТ Р ИСО 8992-2011</div>
<div class="r" style="left:0;top:88px;width:1069px;height:20px;background:#fff;border-top:1px solid #fff;border-bottom:1px solid #e8e8e8"></div>
<div class="r" style="left:121px;top:88px;width:1px;height:22px;background:#e8e8e8"></div>
<div class="r" style="left:361px;top:88px;width:1px;height:22px;background:#e8e8e8"></div>
<div class="r" style="left:489px;top:88px;width:1px;height:22px;background:#e8e8e8"></div>
<div class="r" style="left:617px;top:88px;width:1px;height:22px;background:#e8e8e8"></div>
<div class="r" style="left:709px;top:88px;width:1px;height:22px;background:#e8e8e8"></div>
<div class="r" style="left:949px;top:88px;width:1px;height:22px;background:#e8e8e8"></div>
<div class="r" style="left:1068px;top:88px;width:1px;height:22px;background:#e8e8e8"></div>
<div class="clip" style="left:4px;top:93px;width:115px">001846349.830.0001</div>
<div class="clip" style="left:125px;top:93px;width:234px">Болт 2аМ30 - 6g x 140.22.НН-3 ГОСТ 7817-80</div>
<div class="clip" style="left:365px;top:93px;width:122px">0184.63.49.830</div>
<div class="clip" style="left:621px;top:93px;width:86px">661435</div>
<div class="clip" style="left:713px;top:93px;width:234px">ГОСТ Р ИСО 8992-2011</div>
<div class="r" style="left:0;top:110px;width:1069px;height:20px;background:#fefee2;border-top:1px solid #fff;border-bottom:1px solid #e8e8e8"></div>
<div class="r" style="left:121px;top:110px;width:1px;height:22px;background:#e8e8e8"></div>
<div class="r" style="left:361px;top:110px;width:1px;height:22px;background:#e8e8e8"></div>
<div class="r" style="left:489px;top:110px;width:1px;height:22px;background:#e8e8e8"></div>
<div class="r" style="left:617px;top:110px;width:1px;height:22px;background:#e8e8e8"></div>
<div class="r" style="left:709px;top:110px;width:1px;height:22px;background:#e8e8e8"></div>
<div class="r" style="left:949px;top:110px;width:1px;height:22px;background:#e8e8e8"></div>
<div class="r" style="left:1068px;top:110px;width:1px;height:22px;background:#e8e8e8"></div>
<div class="clip" style="left:4px;top:115px;width:115px">001846065.830.0001</div>
<div class="clip" style="left:125px;top:115px;width:234px">Болт 2М30 - 6g x 140.88.35Х ГОСТ 7817-80</div>
<div class="clip" style="left:365px;top:115px;width:122px">0184.60.65.830</div>
<div class="clip" style="left:621px;top:115px;width:86px">26835</div>
<div class="clip" style="left:713px;top:115px;width:234px">ГОСТ Р ИСО 8992-2011</div>
<div class="r" style="left:0;top:132px;width:1069px;height:20px;background:#fff;border-top:1px solid #fff;border-bottom:1px solid #e8e8e8"></div>
<div class="r" style="left:121px;top:132px;width:1px;height:22px;background:#e8e8e8"></div>
<div class="r" style="left:361px;top:132px;width:1px;height:22px;background:#e8e8e8"></div>
<div class="r" style="left:489px;top:132px;width:1px;height:22px;background:#e8e8e8"></div>
<div class="r" style="left:617px;top:132px;width:1px;height:22px;background:#e8e8e8"></div>
<div class="r" style="left:709px;top:132px;width:1px;height:22px;background:#e8e8e8"></div>
<div class="r" style="left:949px;top:132px;width:1px;height:22px;background:#e8e8e8"></div>
<div class="r" style="left:1068px;top:132px;width:1px;height:22px;background:#e8e8e8"></div>
<div class="clip" style="left:4px;top:137px;width:115px">281413000.018.2256</div>
<div class="clip" style="left:125px;top:137px;width:234px">Головка воздушная для двух фильтрующих ...</div>
<div class="clip" style="left:365px;top:137px;width:122px">ВНТА.632737.007</div>
<div class="clip" style="left:493px;top:137px;width:122px">ВНТА.632737.007</div>
<div class="clip" style="left:621px;top:137px;width:86px">281413000.018</div>
<div class="clip" style="left:713px;top:137px;width:234px">Краны и затворы шаровые поворотные с ...</div>
<div class="r" style="left:0;top:154px;width:1069px;height:20px;background:#fefee2;border-top:1px solid #fff;border-bottom:1px solid #e8e8e8"></div>
<div class="r" style="left:121px;top:154px;width:1px;height:22px;background:#e8e8e8"></div>
<div class="r" style="left:361px;top:154px;width:1px;height:22px;background:#e8e8e8"></div>
<div class="r" style="left:489px;top:154px;width:1px;height:22px;background:#e8e8e8"></div>
<div class="r" style="left:617px;top:154px;width:1px;height:22px;background:#e8e8e8"></div>
<div class="r" style="left:709px;top:154px;width:1px;height:22px;background:#e8e8e8"></div>
<div class="r" style="left:949px;top:154px;width:1px;height:22px;background:#e8e8e8"></div>
<div class="r" style="left:1068px;top:154px;width:1px;height:22px;background:#e8e8e8"></div>
<div class="clip" style="left:4px;top:159px;width:115px">265141000.002.0365</div>
<div class="clip" style="left:125px;top:159px;width:234px">Газоанализатор СГГ 3501  Коробка ...</div>
<div class="clip" style="left:365px;top:159px;width:122px">СГГ 3501</div>
<div class="clip" style="left:493px;top:159px;width:122px">СГГ 3501</div>
<div class="clip" style="left:621px;top:159px;width:86px">265141000.002</div>
<div class="clip" style="left:713px;top:159px;width:234px">Приборы и аппаратура для измерения или ...</div>
<div class="r" style="left:0;top:176px;width:1069px;height:20px;background:#fff;border-top:1px solid #fff;border-bottom:1px solid #e8e8e8"></div>
<div class="r" style="left:121px;top:176px;width:1px;height:22px;background:#e8e8e8"></div>
<div class="r" style="left:361px;top:176px;width:1px;height:22px;background:#e8e8e8"></div>
<div class="r" style="left:489px;top:176px;width:1px;height:22px;background:#e8e8e8"></div>
<div class="r" style="left:617px;top:176px;width:1px;height:22px;background:#e8e8e8"></div>
<div class="r" style="left:709px;top:176px;width:1px;height:22px;background:#e8e8e8"></div>
<div class="r" style="left:949px;top:176px;width:1px;height:22px;background:#e8e8e8"></div>
<div class="r" style="left:1068px;top:176px;width:1px;height:22px;background:#e8e8e8"></div>
<div class="clip" style="left:4px;top:181px;width:115px">139229000.001.0186</div>
<div class="clip" style="left:125px;top:181px;width:234px">Бортовая распределительная коробка типа ...</div>
<div class="clip" style="left:365px;top:181px;width:122px">SI-JB01</div>
<div class="clip" style="left:493px;top:181px;width:122px">SI-JB01</div>
<div class="clip" style="left:621px;top:181px;width:86px">139229000.001</div>
<div class="clip" style="left:713px;top:181px;width:234px">Изделия текстильные готовые прочие ...</div>
<div class="r" style="left:0;top:198px;width:1069px;height:20px;background:#fefee2;border-top:1px solid #fff;border-bottom:1px solid #e8e8e8"></div>
<div class="r" style="left:121px;top:198px;width:1px;height:22px;background:#e8e8e8"></div>
<div class="r" style="left:361px;top:198px;width:1px;height:22px;background:#e8e8e8"></div>
<div class="r" style="left:489px;top:198px;width:1px;height:22px;background:#e8e8e8"></div>
<div class="r" style="left:617px;top:198px;width:1px;height:22px;background:#e8e8e8"></div>
<div class="r" style="left:709px;top:198px;width:1px;height:22px;background:#e8e8e8"></div>
<div class="r" style="left:949px;top:198px;width:1px;height:22px;background:#e8e8e8"></div>
<div class="r" style="left:1068px;top:198px;width:1px;height:22px;background:#e8e8e8"></div>
<div class="clip" style="left:4px;top:203px;width:115px">279040190.010.0007</div>
<div class="clip" style="left:125px;top:203px;width:234px">Коробка СКС-5-25, ИШДУ.301248.015, ...</div>
<div class="clip" style="left:365px;top:203px;width:122px">ИШДУ.301248.015</div>
<div class="clip" style="left:493px;top:203px;width:122px">ИШДУ.301248.015</div>
<div class="clip" style="left:621px;top:203px;width:86px">279040190.010</div>
<div class="clip" style="left:713px;top:203px;width:234px">Коробки соединительные</div>
<div class="r" style="left:0;top:220px;width:1069px;height:20px;background:#fff;border-top:1px solid #fff;border-bottom:1px solid #e8e8e8"></div>
<div class="r" style="left:121px;top:220px;width:1px;height:22px;background:#e8e8e8"></div>
<div class="r" style="left:361px;top:220px;width:1px;height:22px;background:#e8e8e8"></div>
<div class="r" style="left:489px;top:220px;width:1px;height:22px;background:#e8e8e8"></div>
<div class="r" style="left:617px;top:220px;width:1px;height:22px;background:#e8e8e8"></div>
<div class="r" style="left:709px;top:220px;width:1px;height:22px;background:#e8e8e8"></div>
<div class="r" style="left:949px;top:220px;width:1px;height:22px;background:#e8e8e8"></div>
<div class="r" style="left:1068px;top:220px;width:1px;height:22px;background:#e8e8e8"></div>
<div class="clip" style="left:4px;top:225px;width:115px">279040190.010.0008</div>
<div class="clip" style="left:125px;top:225px;width:234px">Коммутационная коробка тип 3 с ...</div>
<div class="clip" style="left:365px;top:225px;width:122px">ВТСП.670330.099ТУ</div>
<div class="clip" style="left:493px;top:225px;width:122px">ВТСП.670330.099ТУ</div>
<div class="clip" style="left:621px;top:225px;width:86px">279040190.010</div>
<div class="clip" style="left:713px;top:225px;width:234px">Коробки соединительные</div>
<div class="r" style="left:0;top:242px;width:1069px;height:20px;background:#fefee2;border-top:1px solid #fff;border-bottom:1px solid #e8e8e8"></div>
<div class="r" style="left:121px;top:242px;width:1px;height:22px;background:#e8e8e8"></div>
<div class="r" style="left:361px;top:242px;width:1px;height:22px;background:#e8e8e8"></div>
<div class="r" style="left:489px;top:242px;width:1px;height:22px;background:#e8e8e8"></div>
<div class="r" style="left:617px;top:242px;width:1px;height:22px;background:#e8e8e8"></div>
<div class="r" style="left:709px;top:242px;width:1px;height:22px;background:#e8e8e8"></div>
<div class="r" style="left:949px;top:242px;width:1px;height:22px;background:#e8e8e8"></div>
<div class="r" style="left:1068px;top:242px;width:1px;height:22px;background:#e8e8e8"></div>
<div class="clip" style="left:4px;top:247px;width:115px">279040190.003.0124</div>
<div class="clip" style="left:125px;top:247px;width:234px">Коробка СК КУС ИШДУ.421457.007, ...</div>
<div class="clip" style="left:365px;top:247px;width:122px">ИШДУ.421457.007</div>
<div class="clip" style="left:493px;top:247px;width:122px">ИШДУ.421457.007</div>
<div class="clip" style="left:621px;top:247px;width:86px">279040190.003</div>
<div class="clip" style="left:713px;top:247px;width:234px">Судовая электросиловая аппаратура и ...</div>
<div class="r" style="left:0;top:264px;width:1069px;height:20px;background:#fff;border-top:1px solid #fff;border-bottom:1px solid #e8e8e8"></div>
<div class="r" style="left:121px;top:264px;width:1px;height:22px;background:#e8e8e8"></div>
<div class="r" style="left:361px;top:264px;width:1px;height:22px;background:#e8e8e8"></div>
<div class="r" style="left:489px;top:264px;width:1px;height:22px;background:#e8e8e8"></div>
<div class="r" style="left:617px;top:264px;width:1px;height:22px;background:#e8e8e8"></div>
<div class="r" style="left:709px;top:264px;width:1px;height:22px;background:#e8e8e8"></div>
<div class="r" style="left:949px;top:264px;width:1px;height:22px;background:#e8e8e8"></div>
<div class="r" style="left:1068px;top:264px;width:1px;height:22px;background:#e8e8e8"></div>
<div class="clip" style="left:4px;top:269px;width:115px">279040190.010.0002</div>
<div class="clip" style="left:125px;top:269px;width:234px">Коробка соединительная КС8Л-0-ОМ3, ...</div>
<div class="clip" style="left:365px;top:269px;width:122px">ИЛПТ.656519.093-01</div>
<div class="clip" style="left:493px;top:269px;width:122px">ИЛПТ.656519.093-01</div>
<div class="clip" style="left:621px;top:269px;width:86px">279040190.010</div>
<div class="clip" style="left:713px;top:269px;width:234px">Коробки соединительные</div>
<div class="clip" style="left:953px;top:269px;width:113px">7053</div>
<div class="r" style="left:0;top:286px;width:1069px;height:20px;background:#fefee2;border-top:1px solid #fff;border-bottom:1px solid #e8e8e8"></div>
<div class="r" style="left:121px;top:286px;width:1px;height:22px;background:#e8e8e8"></div>
<div class="r" style="left:361px;top:286px;width:1px;height:22px;background:#e8e8e8"></div>
<div class="r" style="left:489px;top:286px;width:1px;height:22px;background:#e8e8e8"></div>
<div class="r" style="left:617px;top:286px;width:1px;height:22px;background:#e8e8e8"></div>
<div class="r" style="left:709px;top:286px;width:1px;height:22px;background:#e8e8e8"></div>
<div class="r" style="left:949px;top:286px;width:1px;height:22px;background:#e8e8e8"></div>
<div class="r" style="left:1068px;top:286px;width:1px;height:22px;background:#e8e8e8"></div>
<div class="clip" style="left:4px;top:291px;width:115px">281413000.018.2348</div>
<div class="clip" style="left:125px;top:291px;width:234px">Распределительная коробка РК-П</div>
<div class="clip" style="left:365px;top:291px;width:122px">ПИКВ.468353.003-208</div>
<div class="clip" style="left:493px;top:291px;width:122px">ПИКВ.468353.003-208</div>
<div class="clip" style="left:621px;top:291px;width:86px">281413000.018</div>
<div class="clip" style="left:713px;top:291px;width:234px">Краны и затворы шаровые поворотные с ...</div>
<div class="r" style="left:0;top:308px;width:1069px;height:20px;background:#fff;border-top:1px solid #fff;border-bottom:1px solid #e8e8e8"></div>
<div class="r" style="left:121px;top:308px;width:1px;height:22px;background:#e8e8e8"></div>
<div class="r" style="left:361px;top:308px;width:1px;height:22px;background:#e8e8e8"></div>
<div class="r" style="left:489px;top:308px;width:1px;height:22px;background:#e8e8e8"></div>
<div class="r" style="left:617px;top:308px;width:1px;height:22px;background:#e8e8e8"></div>
<div class="r" style="left:709px;top:308px;width:1px;height:22px;background:#e8e8e8"></div>
<div class="r" style="left:949px;top:308px;width:1px;height:22px;background:#e8e8e8"></div>
<div class="r" style="left:1068px;top:308px;width:1px;height:22px;background:#e8e8e8"></div>
<div class="clip" style="left:4px;top:313px;width:115px">002550501.669.0001</div>
<div class="clip" style="left:125px;top:313px;width:234px">Пруток спл.3М 80 х НД ОСТ 1.92062-90 / ТУ ...</div>
<div class="clip" style="left:365px;top:313px;width:122px">0255.05.01.669</div>
<div class="clip" style="left:621px;top:313px;width:86px">292140</div>
<div class="clip" style="left:713px;top:313px;width:234px">спл.3М</div>
<div class="r" style="left:0;top:330px;width:1069px;height:20px;background:#fefee2;border-top:1px solid #fff;border-bottom:1px solid #e8e8e8"></div>
<div class="r" style="left:121px;top:330px;width:1px;height:22px;background:#e8e8e8"></div>
<div class="r" style="left:361px;top:330px;width:1px;height:22px;background:#e8e8e8"></div>
<div class="r" style="left:489px;top:330px;width:1px;height:22px;background:#e8e8e8"></div>
<div class="r" style="left:617px;top:330px;width:1px;height:22px;background:#e8e8e8"></div>
<div class="r" style="left:709px;top:330px;width:1px;height:22px;background:#e8e8e8"></div>
<div class="r" style="left:949px;top:330px;width:1px;height:22px;background:#e8e8e8"></div>
<div class="r" style="left:1068px;top:330px;width:1px;height:22px;background:#e8e8e8"></div>
<div class="clip" style="left:4px;top:335px;width:115px">002550501.474.0001</div>
<div class="clip" style="left:125px;top:335px;width:234px">Пруток спл.3М 40 х НД ОСТ 1.92062-90 / ТУ ...</div>
<div class="clip" style="left:365px;top:335px;width:122px">0255.05.01.474</div>
<div class="clip" style="left:621px;top:335px;width:86px">292140</div>
<div class="clip" style="left:713px;top:335px;width:234px">спл.3М</div>
<div class="r" style="left:0;top:352px;width:1069px;height:20px;background:#fff;border-top:1px solid #fff;border-bottom:1px solid #e8e8e8"></div>
<div class="r" style="left:121px;top:352px;width:1px;height:22px;background:#e8e8e8"></div>
<div class="r" style="left:361px;top:352px;width:1px;height:22px;background:#e8e8e8"></div>
<div class="r" style="left:489px;top:352px;width:1px;height:22px;background:#e8e8e8"></div>
<div class="r" style="left:617px;top:352px;width:1px;height:22px;background:#e8e8e8"></div>
<div class="r" style="left:709px;top:352px;width:1px;height:22px;background:#e8e8e8"></div>
<div class="r" style="left:949px;top:352px;width:1px;height:22px;background:#e8e8e8"></div>
<div class="r" style="left:1068px;top:352px;width:1px;height:22px;background:#e8e8e8"></div>
<div class="clip" style="left:4px;top:357px;width:115px">002550657.843.0001</div>
<div class="clip" style="left:125px;top:357px;width:234px">Пруток спл.3М 150 х НД - I ОСТ В5Р.9325-...</div>
<div class="clip" style="left:365px;top:357px;width:122px">0255.06.57.843</div>
<div class="clip" style="left:621px;top:357px;width:86px">648552</div>
<div class="clip" style="left:713px;top:357px;width:234px">I</div>
<div class="r" style="left:0;top:374px;width:1069px;height:20px;background:#fefee2;border-top:1px solid #fff;border-bottom:1px solid #e8e8e8"></div>
<div class="r" style="left:121px;top:374px;width:1px;height:22px;background:#e8e8e8"></div>
<div class="r" style="left:361px;top:374px;width:1px;height:22px;background:#e8e8e8"></div>
<div class="r" style="left:489px;top:374px;width:1px;height:22px;background:#e8e8e8"></div>
<div class="r" style="left:617px;top:374px;width:1px;height:22px;background:#e8e8e8"></div>
<div class="r" style="left:709px;top:374px;width:1px;height:22px;background:#e8e8e8"></div>
<div class="r" style="left:949px;top:374px;width:1px;height:22px;background:#e8e8e8"></div>
<div class="r" style="left:1068px;top:374px;width:1px;height:22px;background:#e8e8e8"></div>
<div class="clip" style="left:4px;top:379px;width:115px">002550501.602.0001</div>
<div class="clip" style="left:125px;top:379px;width:234px">Пруток спл.3М 60 х НД ОСТ 1.92062-90 / ТУ ...</div>
<div class="clip" style="left:365px;top:379px;width:122px">0255.05.01.602</div>
<div class="clip" style="left:621px;top:379px;width:86px">292140</div>
<div class="clip" style="left:713px;top:379px;width:234px">спл.3М</div>
<div class="r" style="left:0;top:396px;width:1069px;height:20px;background:#fff;border-top:1px solid #fff;border-bottom:1px solid #e8e8e8"></div>
<div class="r" style="left:121px;top:396px;width:1px;height:22px;background:#e8e8e8"></div>
<div class="r" style="left:361px;top:396px;width:1px;height:22px;background:#e8e8e8"></div>
<div class="r" style="left:489px;top:396px;width:1px;height:22px;background:#e8e8e8"></div>
<div class="r" style="left:617px;top:396px;width:1px;height:22px;background:#e8e8e8"></div>
<div class="r" style="left:709px;top:396px;width:1px;height:22px;background:#e8e8e8"></div>
<div class="r" style="left:949px;top:396px;width:1px;height:22px;background:#e8e8e8"></div>
<div class="r" style="left:1068px;top:396px;width:1px;height:22px;background:#e8e8e8"></div>
<div class="clip" style="left:4px;top:401px;width:115px">002551657.857.0001</div>
<div class="clip" style="left:125px;top:401px;width:234px">Пруток спл.3М 160 х НД - I ОСТ В5Р.9325-...</div>
<div class="clip" style="left:365px;top:401px;width:122px">0255.06.57.857</div>
<div class="clip" style="left:621px;top:401px;width:86px">648552</div>
<div class="clip" style="left:713px;top:401px;width:234px">I</div>
</div>
<div class="r" style="left:1900px;top:520px;width:13px;height:404px;background:#f0f0f0"></div>
<svg class="ic" style="left:1904px;top:527px" width="8" height="4"><path d="M0 4 L4 0 L8 4 Z" fill="#a0a0a0"/></svg>
<div class="r" style="left:1902px;top:537px;width:11px;height:171px;background:#c2c2c2"></div>
<svg class="ic" style="left:1904px;top:914px" width="8" height="4"><path d="M0 0 L4 4 L8 0 Z" fill="#5a5a5a"/></svg>
<svg class="ic" style="left:5px;top:95px" width="10" height="9" viewBox="0 0 10 9"><path d="M1.3 4.2 L4 7 L8.7 1.3" stroke="#a4d800" stroke-width="2.6" fill="none" stroke-linejoin="round"/></svg>
<svg class="ic" style="left:3px;top:119px" width="14" height="14" viewBox="0 0 14 14"><path d="M0 0 H12.5 L14 1.5 V14 H0 Z" fill="#cbcbcb"/><rect x="4" y="0" width="6" height="5" fill="#b0b0b0"/><rect x="7" y="1" width="2" height="3" fill="#dedede"/><rect x="3" y="7" width="8" height="7" fill="#fff"/><rect x="5" y="9" width="4" height="1" fill="#c8c8c8"/><rect x="5" y="11" width="4" height="1" fill="#c8c8c8"/><rect x="12" y="12" width="1" height="1" fill="#fff"/></svg>
<svg class="ic" style="left:4px;top:146px" width="12" height="12" viewBox="0 0 12 12"><path d="M1 1 L11 11 M11 1 L1 11" stroke="#bdbdbd" stroke-width="2.4"/></svg>
<svg class="ic" style="left:0px;top:168px" width="20" height="20" viewBox="0 0 20 20"><path d="M4.6 7.2 A6 6 0 0 1 14.3 5.6" stroke="#7bc043" stroke-width="1.9" fill="none"/><path d="M12.2 7.6 L17.9 5.1 L16.6 11 Z" fill="#7bc043"/><path d="M15.4 12.8 A6 6 0 0 1 5.7 14.4" stroke="#7bc043" stroke-width="1.9" fill="none"/><path d="M3.1 8.9 L7.9 12.5 L2.4 14.7 Z" fill="#7bc043"/></svg>
<svg class="ic" style="left:0px;top:194px" width="20" height="20" viewBox="0 0 20 20"><path d="M4.6 16 L13 7.6" stroke="#f7a21b" stroke-width="3"/><path d="M11.15 5.65 L13.65 3.15 L17.85 7.35 L15.35 9.85 Z" fill="#5f5f5f"/><path d="M14.9 4.4 L15.9 3.4 L17.4 4.9 L16.4 5.9 Z" fill="#f7a21b"/><path d="M6.5 6.5 L13.5 13.5" stroke="#bfbfbf" stroke-width="2.6"/><circle cx="5.4" cy="5.6" r="3.1" fill="#bfbfbf"/><path d="M5.4 5.6 L1.5 1.7" stroke="#fff" stroke-width="2"/><circle cx="14.6" cy="14.4" r="3.1" fill="#bfbfbf"/><path d="M14.6 14.4 L18.5 18.3" stroke="#fff" stroke-width="2"/></svg>
<div class="r" style="left:0px;top:215px;width:20px;height:1px;background:#c8c8c8"></div>
<svg class="ic" style="left:7px;top:221px" width="7" height="4"><path d="M0 0 H7 L3.5 4 Z" fill="#111"/></svg>
<svg class="ic" style="left:3px;top:236px" width="15" height="15" viewBox="0 0 15 15"><circle cx="9.2" cy="5.8" r="4.6" stroke="#4aa2f0" stroke-width="1.5" fill="#fff"/><path d="M7.5 5 A2 2 0 0 1 9 3.5" stroke="#bbb" stroke-width="0.8" fill="none"/><path d="M1 14 L5.5 9.5" stroke="#555" stroke-width="2.4"/></svg>
<svg class="ic" style="left:4px;top:263px" width="15" height="15" viewBox="0 0 15 15"><rect x="2" y="0" width="2" height="5" fill="#a9a9a9"/><rect x="8" y="0" width="2" height="5" fill="#a9a9a9"/><path d="M0 5 H12 V9 L9 11.5 H3 L0 9 Z" fill="#a9a9a9"/><rect x="5" y="11" width="2" height="4" fill="#a9a9a9"/><path d="M9.5 10 L14 14.5 M14 10 L9.5 14.5 M11.75 9.5 V15 M9 12.25 H14.5" stroke="#bdbdbd" stroke-width="1.1"/></svg>
<svg class="ic" style="left:3px;top:288px" width="16" height="15" viewBox="0 0 16 15"><rect x="0" y="1.5" width="11" height="1" fill="#3c9be8"/><rect x="0.6" y="5.1" width="13.8" height="8.8" fill="#fff" stroke="#555" stroke-width="1.2"/><rect x="3" y="8" width="9" height="1" fill="#aaa"/><rect x="3" y="10.5" width="9" height="1" fill="#aaa"/><path d="M3.5 12 L12.5 3" stroke="#f7a021" stroke-width="2.8"/><path d="M2.5 13 L4.2 11.3" stroke="#555" stroke-width="1.6"/><circle cx="14" cy="1.8" r="1.8" fill="#ee3333"/></svg>
<svg class="ic" style="left:4px;top:314px" width="13" height="17" viewBox="0 0 13 17"><rect x="6.6" y="2.6" width="5.8" height="11.8" fill="#fff" stroke="#555" stroke-width="1.2"/><path d="M0 1.5 L7 0 V17 L0 15.5 Z" fill="#f9a41f"/><rect x="3" y="7.5" width="2" height="2" fill="#fff"/></svg>
<svg class="ic" style="left:0px;top:517px" width="20" height="20" viewBox="0 0 20 20"><path d="M4.6 7.2 A6 6 0 0 1 14.3 5.6" stroke="#7bc043" stroke-width="1.9" fill="none"/><path d="M12.2 7.6 L17.9 5.1 L16.6 11 Z" fill="#7bc043"/><path d="M15.4 12.8 A6 6 0 0 1 5.7 14.4" stroke="#7bc043" stroke-width="1.9" fill="none"/><path d="M3.1 8.9 L7.9 12.5 L2.4 14.7 Z" fill="#7bc043"/></svg>
<svg class="ic" style="left:4px;top:546px" width="13" height="15" viewBox="0 0 13 15"><rect x="0.5" y="0.5" width="11" height="13" fill="#fff" stroke="#6a6a6a" stroke-width="1"/><rect x="5" y="2" width="2" height="2.5" fill="#f9a21b"/><path d="M2.8 4.2 H9.2 L6 7 Z" fill="#f9a21b"/><rect x="5" y="6.5" width="2" height="3" fill="#f9a21b"/><path d="M2.8 9 H9.2 L6 12.2 Z" fill="#f9a21b"/></svg>
<svg class="ic" style="left:7px;top:574px" width="6" height="10" viewBox="0 0 6 10"><path d="M6 0 V10 L0 5 Z" fill="#4a5fbf"/></svg>
<svg class="ic" style="left:3px;top:597px" width="16" height="15" viewBox="0 0 16 15"><rect x="0" y="1.5" width="11" height="1" fill="#3c9be8"/><rect x="0.6" y="5.1" width="13.8" height="8.8" fill="#fff" stroke="#555" stroke-width="1.2"/><rect x="3" y="8" width="9" height="1" fill="#aaa"/><rect x="3" y="10.5" width="9" height="1" fill="#aaa"/><path d="M3.5 12 L12.5 3" stroke="#f7a021" stroke-width="2.8"/><path d="M2.5 13 L4.2 11.3" stroke="#555" stroke-width="1.6"/><circle cx="14" cy="1.8" r="1.8" fill="#ee3333"/></svg>
</body></html>
